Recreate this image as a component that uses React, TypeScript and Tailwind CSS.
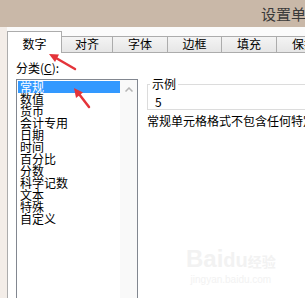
import React from "react"

const tabs = ["对齐", "字体", "边框", "填充", "保护"]
const tabWidths = ["w-[51px]", "w-[55px]", "w-[54px]", "w-[55px]", "w-[55px]"]

const categories = [
  "常规",
  "数值",
  "货币",
  "会计专用",
  "日期",
  "时间",
  "百分比",
  "分数",
  "科学记数",
  "文本",
  "特殊",
  "自定义",
]

export default function App() {
  return (
    <div className="relative w-[305px] h-[298px] overflow-hidden bg-white text-black font-['Noto_Sans_CJK_SC','Noto_Sans',sans-serif]">
      {/* Title bar */}
      <div className="h-[27px] bg-[#c9b8a8] flex items-center pl-[261px]">
        <span className="text-[15px] leading-[15px] text-[#3a3a3a] whitespace-nowrap">设置单元格格式</span>
      </div>

      <div className="flex">
        {/* window frame */}
        <div className="w-[7px] shrink-0 h-[271px] bg-[#f3ede8]" />

        <div className="flex-1 min-w-0 flex flex-col pt-[4px] bg-[#fbfbfb]">
          {/* Tabs */}
          <div className="flex items-end h-[22px]">
            <div className="w-[55px] shrink-0 h-[22px] bg-white border-t border-l border-r border-[#acacac] flex items-end justify-center pb-[3px] text-[12px] leading-[12px]">
              数字
            </div>
            {tabs.map((t, i) => (
              <div
                key={t}
                className={`${tabWidths[i]} shrink-0 h-[17px] bg-gradient-to-b from-[#f4f4f4] to-[#e6e6e6] border-t border-r border-b border-[#acacac] flex items-end justify-center pb-[2px] text-[12px] leading-[12px] whitespace-nowrap`}
              >
                {t}
              </div>
            ))}
          </div>

          {/* Panel */}
          <div className="flex-1 bg-white border-l border-[#acacac] pl-[8px] flex gap-[9px]">
            <div className="flex flex-col shrink-0">
              <div className="pt-[9px] text-[12px] leading-[12px] whitespace-nowrap">
                分类(<span className="underline">C</span>):
              </div>
              <div className="mt-[5px] w-[122px] h-[230px] border border-[#828790] bg-white flex">
                <div className="w-[103px] pl-[1px] pt-[1px] flex flex-col">
                  {categories.map((c, i) => (
                    <div
                      key={c}
                      className={`h-[12px] pl-[2px] text-[12px] leading-[12px] whitespace-nowrap ${
                        i === 0 ? "bg-[#3399ff] text-white" : ""
                      }`}
                    >
                      {c}
                    </div>
                  ))}
                </div>
                <div className="w-[17px] bg-[#f9f9f9] flex flex-col">
                  <div className="h-[17px] flex items-center justify-center pt-[1px]">
                    <svg width="8" height="5" viewBox="0 0 8 5">
                      <path d="M0.5 4.5 L4 1 L7.5 4.5" fill="none" stroke="#b5b5b5" strokeWidth="1.5" />
                    </svg>
                  </div>
                </div>
              </div>
            </div>

            <div className="flex flex-col pt-[25px] shrink-0">
              <fieldset className="w-[170px] border border-[#dcdcdc] pl-[7px] pt-[6px] pb-[1px]">
                <legend className="-ml-[5px] px-[2px] text-[12px] leading-[12px]">示例</legend>
                <div className="text-[12px] leading-[12px]">5</div>
              </fieldset>
              <div className="mt-[5px] text-[12px] leading-[12px] whitespace-nowrap">
                常规单元格格式不包含任何特定的数字格式。
              </div>
            </div>
          </div>
        </div>
      </div>

      {/* watermark */}
      <div className="absolute left-[186px] top-[246px] flex flex-col items-center text-[#f2f2f2] pointer-events-none">
        <div className="text-[24px] leading-[26px] font-bold font-['Liberation_Sans',sans-serif] whitespace-nowrap">
          Bai<span className="text-[20px]">du</span><span className="text-[14px] font-['Noto_Sans_CJK_SC',sans-serif]">经验</span>
        </div>
        <div className="text-[10px] leading-[12px] font-['Liberation_Sans',sans-serif] whitespace-nowrap">jingyan.baidu.com</div>
      </div>

      {/* red arrows */}
      <svg className="absolute inset-0 pointer-events-none" width="305" height="298" viewBox="0 0 305 298">
        <path d="M56 58 L75 69" stroke="#e4343a" strokeWidth="2.5" strokeLinecap="round" />
        <path d="M49 54 L59 54.5 L55 62 Z" fill="#e4343a" />
        <path d="M79 94 L89 107" stroke="#e4343a" strokeWidth="2.5" strokeLinecap="round" />
        <path d="M74 88 L83 92.5 L76 98 Z" fill="#e4343a" />
      </svg>
    </div>
  )
}
